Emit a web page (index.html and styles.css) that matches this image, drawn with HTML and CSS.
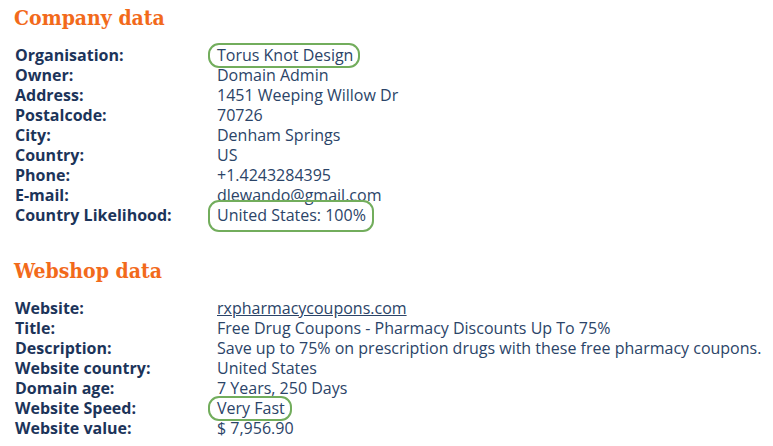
FILE: index.html
```html
<!DOCTYPE html>
<html>
<head>
<meta charset="utf-8">
<link rel="stylesheet" href="styles.css">
</head>
<body>
<section class="block">
  <h2 class="title">Company data</h2>
  <dl class="info">
    <dt>Organisation:</dt><dd><span class="mark mark-a">Torus Knot Design</span></dd>
    <dt>Owner:</dt><dd>Domain Admin</dd>
    <dt>Address:</dt><dd>1451 Weeping Willow Dr</dd>
    <dt>Postalcode:</dt><dd>70726</dd>
    <dt>City:</dt><dd>Denham Springs</dd>
    <dt>Country:</dt><dd>US</dd>
    <dt>Phone:</dt><dd>+1.4243284395</dd>
    <dt>E-mail:</dt><dd>dlewando@gmail.com</dd>
    <dt>Country Likelihood:</dt><dd><span class="mark mark-b">United States: 100%</span></dd>
  </dl>
</section>
<section class="block block-second">
  <h2 class="title">Webshop data</h2>
  <dl class="info">
    <dt>Website:</dt><dd><a class="link" href="#">rxpharmacycoupons.com</a></dd>
    <dt>Title:</dt><dd>Free Drug Coupons - Pharmacy Discounts Up To 75%</dd>
    <dt>Description:</dt><dd>Save up to 75% on prescription drugs with these free pharmacy coupons.</dd>
    <dt>Website country:</dt><dd>United States</dd>
    <dt>Domain age:</dt><dd>7 Years, 250 Days</dd>
    <dt>Website Speed:</dt><dd><span class="mark mark-a">Very Fast</span></dd>
    <dt>Website value:</dt><dd>$ 7,956.90</dd>
  </dl>
</section>
</body>
</html>
```

FILE: styles.css
```css
html, body {
  margin: 0;
  padding: 0;
  background: #ffffff;
}
body {
  padding: 4px 0 0 15px;
  font-family: "Open Sans", "Liberation Sans", sans-serif;
  font-size: 16px;
  line-height: 20px;
  color: #2b4468;
}
.block {
  display: flex;
  flex-direction: column;
}
.block-second {
  margin-top: 32px;
}
.title {
  margin: 0 0 0 -1px;
  font-family: "DejaVu Serif", serif;
  font-stretch: condensed;
  font-weight: bold;
  font-size: 21px;
  line-height: 28px;
  color: #f26a1b;
}
.info {
  display: grid;
  grid-template-columns: 202px 1fr;
  margin: 13px 0 0 0;
}
.info dt {
  font-weight: bold;
  color: #1c345a;
}
.info dd {
  margin: 0;
  white-space: nowrap;
}
.link {
  color: #2b4468;
  text-decoration: underline;
}
.mark {
  position: relative;
}
.mark::after {
  content: "";
  position: absolute;
  border: 2px solid #72ad5c;
  border-radius: 11px;
}
.mark-a::after {
  left: -9px;
  right: -7px;
  top: -1px;
  bottom: -2px;
}
.mark-b::after {
  left: -9px;
  right: -8px;
  top: -4px;
  bottom: -6px;
}
```
